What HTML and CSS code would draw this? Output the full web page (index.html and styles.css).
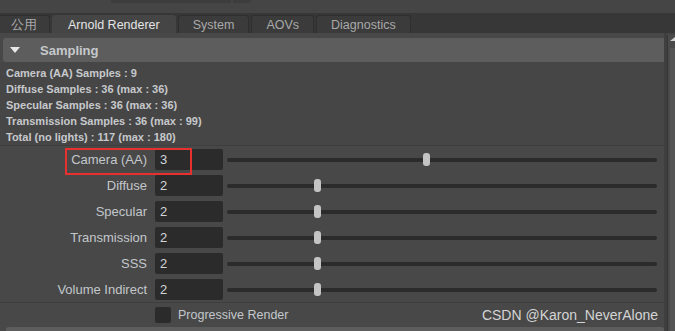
FILE: index.html
```html
<!DOCTYPE html>
<html lang="en">
<head>
    <meta charset="UTF-8">
    <meta name="viewport" content="width=device-width, initial-scale=1.0">
    <title>Render Settings - Arnold Renderer</title>
    <link rel="stylesheet" href="styles.css">
</head>
<body>
    <div class="topbar">
        <span class="stub wide"></span>
        <span class="stub"></span>
    </div>

    <div class="tabs">
        <div class="tab first">公用</div>
        <div class="tab active">Arnold Renderer</div>
        <div class="tab">System</div>
        <div class="tab">AOVs</div>
        <div class="tab">Diagnostics</div>
    </div>

    <div class="panel">
        <div class="content">
            <div class="section-header"><span class="arrow"></span>Sampling</div>

            <div class="summary">
                <div>Camera (AA) Samples : 9</div>
                <div>Diffuse Samples : 36 (max : 36)</div>
                <div>Specular Samples : 36 (max : 36)</div>
                <div>Transmission Samples : 36 (max : 99)</div>
                <div>Total (no lights) : 117 (max : 180)</div>
            </div>

            <div class="rows">
                <div class="row">
                    <span class="label">Camera (AA)</span>
                    <span class="field">3</span>
                    <span class="slider"><span class="handle" style="left: 45.6%;"></span></span>
                    <span class="highlight"></span>
                </div>
                <div class="row">
                    <span class="label">Diffuse</span>
                    <span class="field">2</span>
                    <span class="slider"><span class="handle" style="left: 20.2%;"></span></span>
                </div>
                <div class="row">
                    <span class="label">Specular</span>
                    <span class="field">2</span>
                    <span class="slider"><span class="handle" style="left: 20.2%;"></span></span>
                </div>
                <div class="row">
                    <span class="label">Transmission</span>
                    <span class="field">2</span>
                    <span class="slider"><span class="handle" style="left: 20.2%;"></span></span>
                </div>
                <div class="row">
                    <span class="label">SSS</span>
                    <span class="field">2</span>
                    <span class="slider"><span class="handle" style="left: 20.2%;"></span></span>
                </div>
                <div class="row">
                    <span class="label">Volume Indirect</span>
                    <span class="field">2</span>
                    <span class="slider"><span class="handle" style="left: 20.2%;"></span></span>
                </div>
            </div>

            <div class="check-row">
                <span class="checkbox"></span>
                <span class="check-label">Progressive Render</span>
            </div>

            <div class="next-header"></div>
        </div>

        <div class="scrollbar">
            <span class="scroll-up"></span>
            <span class="scroll-thumb"></span>
        </div>
    </div>

    <div class="watermark">CSDN @Karon_NeverAlone</div>
</body>
</html>
```

FILE: styles.css
```css
html {
    overflow: hidden;
}

body {
    margin: 0;
    width: 675px;
    height: 331px;
    overflow: hidden;
    background: #454545;
    font-family: 'Liberation Sans', Arial, sans-serif;
    color: #c8c8c8;
    position: relative;
}

/* strip above the tabs */
.topbar {
    height: 13px;
    display: flex;
    padding-left: 111px;
    gap: 2px;
}

.stub {
    width: 18px;
    height: 3px;
    background: #3d3d3d;
    border-radius: 0 0 2px 2px;
}

.stub.wide {
    width: 120px;
}

/* tab bar */
.tabs {
    height: 20px;
    background: #373737;
    display: flex;
    align-items: flex-end;
    gap: 2px;
}

.tab {
    height: 18px;
    line-height: 18px;
    padding: 0 14px;
    font-size: 12.5px;
    color: #a9a9a9;
    background: #3b3b3b;
    border: 1px solid #2f2f2f;
    border-bottom: none;
    border-radius: 3px 3px 0 0;
    box-sizing: border-box;
}

.tab.first {
    margin-left: -3px;
    width: 53px;
    text-align: center;
    padding: 0;
}

.tab.active {
    background: #454545;
    color: #e4e4e4;
    border-color: #454545;
    padding: 0 15px;
}

/* main panel */
.panel {
    display: flex;
    height: 298px;
}

.content {
    flex: 1;
    background: #484848;
    border-right: 3px solid #3f3f3f;
    overflow: hidden;
}

.section-header {
    height: 24px;
    margin: 5px -2px 0 3px;
    background: #5d5d5d;
    border-radius: 3px;
    display: flex;
    align-items: center;
    font-size: 13px;
    font-weight: bold;
    color: #c6c9cc;
}

.arrow {
    width: 0;
    height: 0;
    border-left: 5px solid transparent;
    border-right: 5px solid transparent;
    border-top: 6px solid #e8e8e8;
    margin: 0 20px 0 7px;
}

.summary {
    padding: 3px 0 0 6px;
    font-size: 11px;
    font-weight: bold;
    line-height: 16px;
    color: #c6c9cc;
    background: #464646;
}

.rows {
    border-top: 1px solid #3e3e3e;
    padding-top: 3px;
    display: flex;
    flex-direction: column;
    gap: 5px;
}

.row {
    height: 21px;
    display: flex;
    align-items: center;
    position: relative;
}

.label {
    width: 147px;
    text-align: right;
    font-size: 13px;
    color: #c3c7cb;
}

.field {
    width: 68px;
    height: 21px;
    line-height: 21px;
    margin-left: 8px;
    padding-left: 5px;
    box-sizing: border-box;
    background: #2b2b2b;
    border-radius: 2px;
    font-size: 13px;
    color: #d2d6da;
}

.slider {
    flex: 1;
    height: 4px;
    margin: 0 7px 0 4px;
    background: #2b2b2b;
    border-radius: 2px;
    position: relative;
}

.handle {
    position: absolute;
    top: -5px;
    width: 7px;
    height: 13px;
    background: #c4c4c4;
    border-radius: 3px;
}

/* annotation box */
.highlight {
    position: absolute;
    left: 65px;
    top: -1px;
    width: 127px;
    height: 27px;
    border: 2px solid #e8302e;
    box-sizing: border-box;
}

.check-row {
    margin-top: 2px;
    border-top: 1px solid #3e3e3e;
    padding: 4px 0;
    display: flex;
    align-items: center;
}

.checkbox {
    width: 16px;
    height: 16px;
    margin-left: 155px;
    background: #2b2b2b;
    border-radius: 2px;
}

.check-label {
    margin-left: 7px;
    font-size: 12.5px;
    color: #c3c7cb;
}

.next-header {
    height: 24px;
    margin-left: 6px;
    background: #5d5d5d;
    border-radius: 3px;
}

.scrollbar {
    width: 7px;
    margin-top: 2px;
    border-left: 1px solid #363636;
    background: #4a4a4a;
    display: flex;
    flex-direction: column;
    align-items: flex-end;
}

.scroll-up {
    width: 0;
    height: 0;
    margin-top: 2px;
    border-left: 5px solid transparent;
    border-bottom: 4px solid #d0d0d0;
}

.scroll-thumb {
    width: 5px;
    flex: 1;
    margin-top: 7px;
    background: #555555;
}

.watermark {
    position: absolute;
    right: 17px;
    bottom: 8px;
    font-size: 14px;
    color: #d4d4d4;
}
```
